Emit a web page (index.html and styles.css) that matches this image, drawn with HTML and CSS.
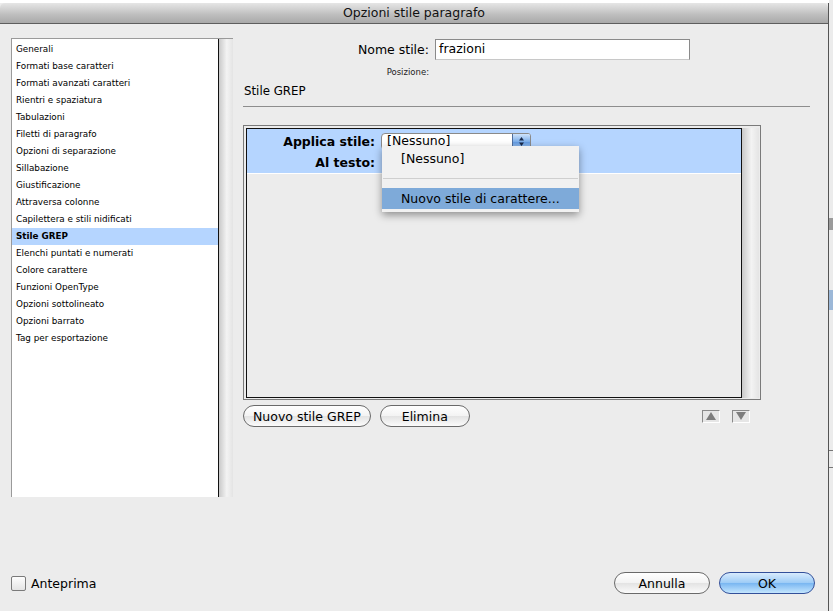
FILE: index.html
```html
<!DOCTYPE html>
<html lang="it">
<head>
    <meta charset="UTF-8">
    <title>Opzioni stile paragrafo</title>
    <link rel="stylesheet" href="styles.css">
</head>
<body>

<div class="finestra">
    <div class="barra-titolo">Opzioni stile paragrafo</div>

    <div class="contenuto">
        <!-- elenco sezioni -->
        <div class="elenco">
            <ul>
                <li>Generali</li>
                <li>Formati base caratteri</li>
                <li>Formati avanzati caratteri</li>
                <li>Rientri e spaziatura</li>
                <li>Tabulazioni</li>
                <li>Filetti di paragrafo</li>
                <li>Opzioni di separazione</li>
                <li>Sillabazione</li>
                <li>Giustificazione</li>
                <li>Attraversa colonne</li>
                <li>Capilettera e stili nidificati</li>
                <li class="attivo">Stile GREP</li>
                <li>Elenchi puntati e numerati</li>
                <li>Colore carattere</li>
                <li>Funzioni OpenType</li>
                <li>Opzioni sottolineato</li>
                <li>Opzioni barrato</li>
                <li>Tag per esportazione</li>
            </ul>
            <div class="scorrimento"></div>
        </div>

        <div class="pannello">
            <div class="riga-nome">
                <label>Nome stile:</label>
                <div class="campo">frazioni</div>
            </div>
            <div class="riga-posizione">
                <label>Posizione:</label>
            </div>
            <div class="sezione">Stile GREP</div>

            <div class="grep">
                <div class="grep-lista">
                    <div class="grep-riga">
                        <div class="grep-campo">
                            <label>Applica stile:</label>
                            <div class="menu-a-comparsa">
                                <span>[Nessuno]</span>
                                <span class="frecce">
                                    <svg width="7" height="11" viewBox="0 0 7 11"><path d="M3.5 1 L6 4.5 H1 Z M3.5 10 L6 6.5 H1 Z" fill="#1a2a4a"/></svg>
                                </span>
                            </div>
                        </div>
                        <div class="grep-campo">
                            <label>Al testo:</label>
                        </div>
                    </div>
                </div>
                <div class="scorrimento"></div>

                <div class="tendina">
                    <div class="voce">[Nessuno]</div>
                    <div class="separatore"></div>
                    <div class="voce scelta">Nuovo stile di carattere...</div>
                </div>
            </div>

            <div class="riga-pulsanti">
                <button class="pillola">Nuovo stile GREP</button>
                <button class="pillola largo">Elimina</button>
                <div class="frecce-ordine">
                    <span class="quadretto">
                        <svg width="12" height="10" viewBox="0 0 12 10"><path d="M6 1 L11 9 H1 Z" fill="#7d7d7d"/></svg>
                    </span>
                    <span class="quadretto">
                        <svg width="12" height="10" viewBox="0 0 12 10"><path d="M6 9 L11 1 H1 Z" fill="#7d7d7d"/></svg>
                    </span>
                </div>
            </div>
        </div>
    </div>

    <div class="piede">
        <div class="anteprima">
            <span class="casella"></span>
            <span>Anteprima</span>
        </div>
        <div class="azioni">
            <button class="pillola grande">Annulla</button>
            <button class="pillola grande ok">OK</button>
        </div>
    </div>
</div>

<div class="bordo-destro">
    <span class="tratto t1"></span>
    <span class="tratto t2"></span>
    <span class="tratto t3"></span>
    <span class="tratto t4"></span>
</div>

</body>
</html>
```

FILE: styles.css
```css
body {
    margin: 0;
    background: #ffffff;
    font-family: "DejaVu Sans", "Liberation Sans", sans-serif;
    color: #000;
    display: flex;
    width: 833px;
    height: 611px;
    overflow: hidden;
}

.finestra {
    width: 829px;
    margin-top: 3px;
    background: #ececec;
    border-right: 1px solid #555;
    display: flex;
    flex-direction: column;
    box-sizing: border-box;
}

.barra-titolo {
    height: 20px;
    line-height: 20px;
    text-align: center;
    font-size: 12.5px;
    color: #111;
    background: linear-gradient(#e6e6e6, #bdbdbd 60%, #a9a9a9);
    border-bottom: 1px solid #5e5e5e;
    border-radius: 5px 5px 0 0;
}

.contenuto {
    display: flex;
    padding: 14px 0 0 11px;
    gap: 10px;
}

/* elenco a sinistra */
.elenco {
    width: 222px;
    height: 459px;
    display: flex;
    border-top: 1px solid #9a9a9a;
    border-left: 1px solid #9a9a9a;
    box-sizing: border-box;
}

.elenco ul {
    flex: 1;
    list-style: none;
    margin: 0;
    padding: 2px 0 0 0;
    background: #fff;
    border-right: 1px solid #111;
}

.elenco li {
    height: 17px;
    line-height: 17px;
    font-size: 8.8px;
    padding-left: 4px;
    white-space: nowrap;
}

.elenco li.attivo {
    background: #b5d5ff;
    font-weight: bold;
}

.scorrimento {
    width: 14px;
    background: linear-gradient(to right, #c9c9c9, #f3f3f3 55%, #e4e4e4);
}

/* pannello destro */
.pannello {
    width: 567px;
    display: flex;
    flex-direction: column;
}

.riga-nome {
    display: flex;
    align-items: center;
    height: 22px;
}

.riga-nome label,
.riga-posizione label {
    width: 186px;
    text-align: right;
    font-size: 12.5px;
}

.campo {
    margin-left: 6px;
    width: 255px;
    height: 21px;
    box-sizing: border-box;
    border: 1px solid #8a8a8a;
    border-bottom-color: #c8c8c8;
    background: #fff;
    font-size: 12.5px;
    line-height: 18px;
    padding-left: 3px;
}

.riga-posizione {
    display: flex;
    height: 24px;
    align-items: center;
}

.riga-posizione label {
    font-size: 8.5px;
    color: #222;
}

.sezione {
    font-size: 11.8px;
    height: 22px;
    line-height: 15px;
    padding-left: 1px;
    border-bottom: 1px solid #8d8d8d;
}

/* riquadro GREP */
.grep {
    position: relative;
    margin-top: 18px;
    width: 518px;
    height: 275px;
    border: 1px solid #7a7a7a;
    box-sizing: border-box;
    padding: 2px 1px 1px 2px;
    display: flex;
}

.grep .scorrimento {
    width: 17px;
}

.grep-lista {
    flex: 1;
    border: 1px solid #111;
}

.grep-riga {
    background: #b5d5ff;
    height: 45px;
    border-bottom: 1px solid #fff;
    padding-top: 2px;
    box-sizing: border-box;
}

.grep-campo {
    display: flex;
    align-items: center;
    height: 20px;
}

.grep-campo + .grep-campo {
    margin-top: 1px;
}

.grep-campo label {
    width: 128px;
    text-align: right;
    font-weight: bold;
    font-size: 12.5px;
}

.menu-a-comparsa {
    margin-left: 6px;
    width: 150px;
    height: 17px;
    box-sizing: border-box;
    background: #fff;
    border: 1px solid #8a8a8a;
    border-radius: 4px 3px 3px 4px;
    display: flex;
    align-items: center;
    font-size: 12.5px;
    padding-left: 5px;
    line-height: 14px;
}

.menu-a-comparsa span:first-child {
    flex: 1;
}

.frecce {
    width: 17px;
    height: 15px;
    background: linear-gradient(#cfe3fb, #7fb0ea 50%, #5f97e0 51%, #a9cdf5);
    border-left: 1px solid #4f6f9f;
    border-radius: 0 2px 2px 0;
    display: flex;
    align-items: center;
    justify-content: center;
}

.tendina {
    position: absolute;
    left: 138px;
    top: 20px;
    width: 197px;
    background: #f1f1f1;
    box-shadow: 0 3px 8px rgba(0,0,0,0.4);
    padding: 2px 0 3px 0;
    font-size: 12.5px;
}

.tendina .voce {
    height: 21px;
    line-height: 21px;
    padding-left: 19px;
}

.tendina .separatore {
    height: 1px;
    background: #cfcfcf;
    margin: 9px 1px 9px 1px;
}

.tendina .voce.scelta {
    background: #7eaad9;
}

/* pulsanti */
.riga-pulsanti {
    display: flex;
    align-items: center;
    margin-top: 5px;
    gap: 9px;
}

.pillola {
    font-family: "DejaVu Sans", "Liberation Sans", sans-serif;
    font-size: 12.5px;
    height: 22px;
    padding: 0 9px;
    border: 1px solid #6a6a6a;
    border-radius: 11px;
    background: linear-gradient(#ffffff, #f3f3f3 50%, #e3e3e3 51%, #fbfbfb);
    color: #000;
}

.pillola.largo {
    width: 90px;
}

.frecce-ordine {
    margin-left: auto;
    margin-right: 60px;
    display: flex;
    gap: 12px;
}

.quadretto {
    width: 18px;
    height: 13px;
    box-sizing: border-box;
    border: 1px solid #fff;
    border-top-color: #8a8a8a;
    border-left-color: #8a8a8a;
    background: #e6e6e6;
    display: flex;
    align-items: center;
    justify-content: center;
}

/* piede */
.piede {
    margin-top: auto;
    display: flex;
    align-items: center;
    padding: 0 13px 17px 11px;
}

.anteprima {
    display: flex;
    align-items: center;
    gap: 5px;
    font-size: 12.5px;
}

.casella {
    width: 13px;
    height: 13px;
    border: 1px solid #7a7a7a;
    border-radius: 2px;
    background: linear-gradient(#fdfdfd, #e4e4e4);
}

.azioni {
    margin-left: auto;
    display: flex;
    gap: 9px;
}

.pillola.grande {
    width: 96px;
}

.pillola.ok {
    border-color: #33509a;
    background: linear-gradient(#d8ebfd, #9ccbf6 50%, #79b6f1 51%, #c4e6fe);
}

.bordo-destro {
    width: 4px;
    background: #ececec;
    position: relative;
}

.tratto {
    position: absolute;
    left: 0;
    width: 4px;
    height: 1px;
    background: #777;
}

.t1 { top: 218px; height: 12px; background: #9b9b9b; }
.t2 { top: 290px; height: 20px; background: #9cb8d8; }
.t3 { top: 450px; }
.t4 { top: 467px; }
```
